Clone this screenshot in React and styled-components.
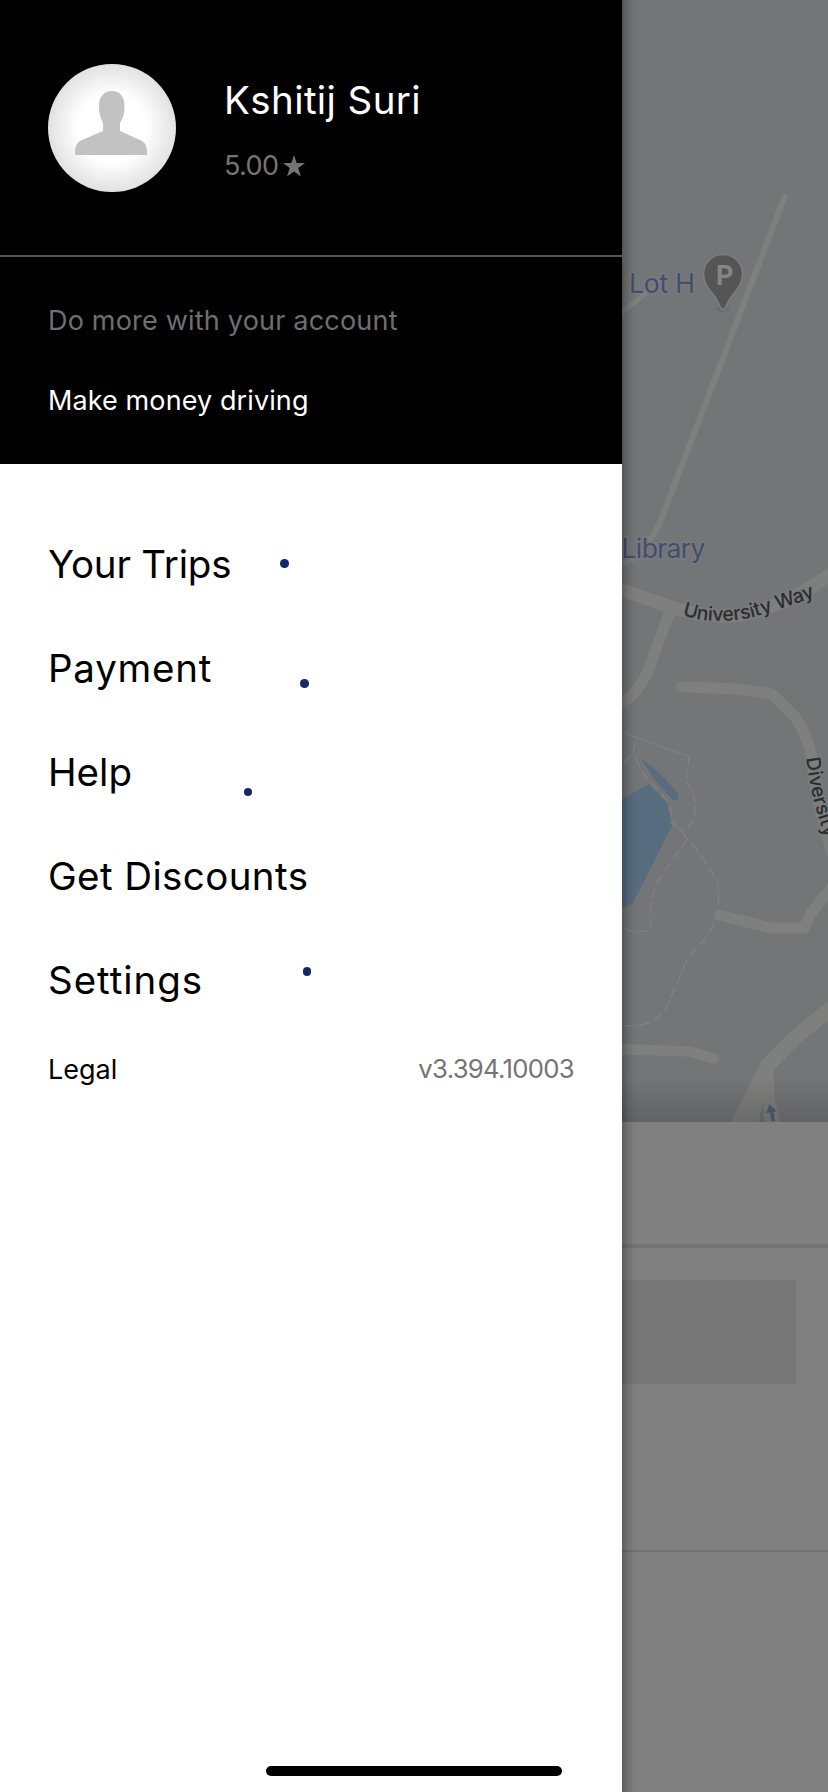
import React from "react";
import styled, { createGlobalStyle } from "styled-components";

const GlobalStyle = createGlobalStyle`
  *, *::before, *::after { box-sizing: border-box; }
  html, body, #root { margin: 0; padding: 0; }
  body { font-family: Inter, Roboto, "Liberation Sans", sans-serif; background: #808080; }
`;

const Screen = styled.div`
  position: relative;
  display: grid;
  grid-template-columns: 622px 1fr;
  width: 828px;
  height: 1792px;
  overflow: hidden;
`;

const Drawer = styled.aside`
  position: relative;
  display: flex;
  flex-direction: column;
  background: #fff;
  color: #000;
`;

const Header = styled.header`
  height: 464px;
  background: #000;
  color: #fff;
`;

const Profile = styled.div`
  display: flex;
  gap: 48px;
  height: 257px;
  padding: 64px 48px 0;
  border-bottom: 2px solid #545454;
`;

const Avatar = styled.div`
  width: 128px;
  height: 128px;
  border-radius: 50%;
  background: radial-gradient(circle, #fff 0, #fff 38%, #e2e2e2 70%);
  overflow: hidden;
  svg { display: block; }
`;

const Identity = styled.div`
  display: flex;
  flex-direction: column;
  gap: 24px;
  padding-top: 12px;
`;

const Name = styled.div`
  font-size: 38.5px;
  font-weight: 380;
  line-height: 49px;
  letter-spacing: 0.4px;
  white-space: nowrap;
`;

const Rating = styled.div`
  display: flex;
  align-items: center;
  gap: 5px;
  font-size: 27px;
  font-weight: 380;
  line-height: 34px;
  letter-spacing: -0.6px;
  color: #757575;
`;

const Account = styled.div`
  padding: 24px 48px 0;
`;

const AccountLine = styled.div`
  font-size: 27px;
  font-weight: 380;
  line-height: 80px;
  letter-spacing: ${(p) => p.$track || 0}px;
  color: ${(p) => (p.$muted ? "#6f6f6f" : "#fff")};
  white-space: nowrap;
`;

const Nav = styled.nav`
  display: flex;
  flex-direction: column;
  padding: 48px 48px 0;
`;

const NavItem = styled.a`
  font-size: 38.5px;
  line-height: 104px;
  letter-spacing: ${(p) => p.$track || 0}px;
  white-space: nowrap;
`;

const Meta = styled.div`
  display: flex;
  align-items: center;
  justify-content: space-between;
  height: 76px;
  padding: 0 48px 2px;
`;

const Legal = styled.span`
  font-size: 27px;
`;

const Version = styled.span`
  padding-bottom: 2px;
  font-size: 25.7px;
  letter-spacing: -0.7px;
  color: #757575;
`;

const Dot = styled.i`
  position: absolute;
  left: ${(p) => p.$x}px;
  top: ${(p) => p.$y}px;
  width: 8.5px;
  height: 8.5px;
  border-radius: 50%;
  background: #142a66;
`;

const HomeBar = styled.div`
  width: 296px;
  height: 10px;
  margin: auto 0 16px 266px;
  border-radius: 5px;
  background: #000;
`;

const Backdrop = styled.main`
  position: relative;
  background: #808080;
  &::after {
    content: "";
    position: absolute;
    inset: 0 auto 0 0;
    width: 16px;
    background: linear-gradient(90deg, rgba(0,0,0,.28), rgba(0,0,0,.12) 35%, rgba(0,0,0,.03) 70%, transparent);
  }
`;

const MapView = styled.svg`
  display: block;
  width: 206px;
  height: 1122px;
`;

const Search = styled.div`
  height: 126px;
  border-bottom: 4px solid #737373;
`;

const Shortcuts = styled.div`
  height: 304px;
  padding: 32px 32px 0 0;
  border-bottom: 2px solid #727272;
`;

const Placeholder = styled.div`
  height: 104px;
  background: #767676;
`;

const navItems = [
  { label: "Your Trips", track: -0.2 },
  { label: "Payment", track: 0.75 },
  { label: "Help", track: 0 },
  { label: "Get Discounts", track: 0.4 },
  { label: "Settings", track: 0.95 },
];

const dots = [[280, 559], [300, 679.3], [243.8, 787.6], [302.7, 967.2]];

function CampusMap() {
  return (
    <MapView viewBox="622 0 206 1122">
      <defs>
        <linearGradient id="fade" x1="0" y1="0" x2="0" y2="1">
          <stop offset="0" stopColor="#000" stopOpacity="0" />
          <stop offset="1" stopColor="#000" stopOpacity="0.16" />
        </linearGradient>
        <path id="university" d="M682.500 615 C704 623 735 623 762 614.500 C785 607 796 604 817 596" />
        <path id="diversity" d="M806 758 L810 784 C814 805 820 821 828 850" />
      </defs>
      <rect x="622" width="206" height="1122" fill="#737577" />
      <g fill="none" stroke="#7f7f7e" strokeLinecap="round" strokeLinejoin="round">
        <path d="M784.5 197 L664 512 Q657 533 647 542" strokeWidth="6" />
        <path d="M647 542 L637 557 L618 565" strokeWidth="5" />
        <path d="M618 315 L645 294 L663 282" strokeWidth="5" />
        <path d="M616 588 L668 606 Q722 625 765 609 Q800 597 832 573" strokeWidth="13" />
        <path d="M671 608 L648 671 Q639 693 617 707" strokeWidth="11" />
        <path d="M681 687 L740 689 L772 694 L795 717 Q808 735 812 760 Q817 805 832 853" strokeWidth="11" />
        <path d="M719 915 L771 928 L804 928 L811 913 L832 887" strokeWidth="11" strokeLinejoin="miter" />
        <path d="M616 1049 L690 1051.5 L714 1058.5" strokeWidth="10.5" />
        <path d="M834 1006 L793 1039 L767 1066" strokeWidth="15" />
      </g>
      <path d="M761 1062 L731 1122 H780 L775 1100 L773 1066Z" fill="#7f7f7e" />
      <path d="M763 1101 L759 1122 H764Z" fill="#6d7073" />
      <path d="M622 799 L649 784 L667 803 L672 825 L633 903 L622 908Z" fill="#576c7e" />
      <path d="M641 759 Q657 770 665 779 L678 794 V800 H673 L658 784Z" fill="#576c7e" />
      <g fill="none" stroke="#808284" strokeWidth="1.3">
        <path d="M625 733 L689 757" strokeWidth="1" />
        <path d="M689 757 L686 781 Q697 796 695 811 Q692 827 682 831 L670 822" strokeDasharray="9 4" />
        <path d="M635 743 L633 753 L643 773 L669 803 L674 823 L691 843 Q710 866 718 884 L719 915 Q710 935 696 949 Q686 957 682 972 L665 1010 Q656 1021 642 1025 L622 1026" strokeDasharray="10 5" />
        <path d="M688 838 L657 882 Q648 905 651 930 Q637 934 623 928" strokeDasharray="10 5" />
        <path d="M624 763 L630 755" />
      </g>
      <g fontFamily="Inter, Roboto, sans-serif" fontSize="26.5" fill="#414e6c" stroke="#797b7d" strokeWidth="3" paintOrder="stroke">
        <text x="629" y="293" textLength="66">Lot H</text>
        <text x="621.5" y="558" textLength="84">Library</text>
      </g>
      <g fontFamily="Inter, Roboto, sans-serif" fontSize="19.5" fontWeight="500" fill="#292d30" stroke="#7a7c7d" strokeWidth="3" paintOrder="stroke">
        <text textLength="137"><textPath href="#university">University Way</textPath></text>
        <text><textPath href="#diversity">Diversity</textPath></text>
      </g>
      <ellipse cx="723" cy="309" rx="7" ry="3" fill="#6b6d6e" />
      <path d="M723 254.500 C712 254.500 703.500 263 703.500 274 C703.500 289 717 294 720 307 Q723 312 726 307 C730 294 742.500 289 742.500 274 C742.500 263 734 254.500 723 254.500Z" fill="#555" stroke="#7c7d7e" strokeWidth="1.600" />
      <text x="716" y="285" fontFamily="Roboto, sans-serif" fontSize="27" fontWeight="700" fill="#858585">P</text>
      <path d="M769.500 1104 L776.500 1111.500 L773.500 1112 L775 1121 L771.500 1121 L770 1112.500 L766 1113Z" fill="#535c7a" />
      <rect x="622" y="1076" width="206" height="46" fill="url(#fade)" />
    </MapView>
  );
}

export default function App() {
  return (
    <>
      <GlobalStyle />
      <Screen>
        <Drawer>
          <Header>
            <Profile>
              <Avatar>
                <svg width="128" height="128" viewBox="0 0 128 128">
                  <path d="M64 27 C55.500 27 51 33 51 42 C51 51 53 54 55 59 V67 L34 76 C29 78 27 83 27 88 V91 H99 V88 C99 82 97 78 92 76 L72 67 V59 C75 54 76.500 50 76.500 42 C76.500 33 72 27 64 27Z" fill="#c2c2c2" />
                </svg>
              </Avatar>
              <Identity>
                <Name>Kshitij Suri</Name>
                <Rating>
                  5.00
                  <svg width="22" height="22" viewBox="0 0 22 22">
                    <path d="M11 0 L13.600 8 H22 L15.200 13 L18 21.500 L11 16.500 L4 21.500 L6.800 13 L0 8 H8.400Z" fill="#757575" />
                  </svg>
                </Rating>
              </Identity>
            </Profile>
            <Account>
              <AccountLine $muted $track={0.2}>Do more with your account</AccountLine>
              <AccountLine $track={0.1}>Make money driving</AccountLine>
            </Account>
          </Header>
          <Nav>
            {navItems.map((item) => (
              <NavItem key={item.label} $track={item.track}>{item.label}</NavItem>
            ))}
          </Nav>
          <Meta>
            <Legal>Legal</Legal>
            <Version>v3.394.10003</Version>
          </Meta>
          {dots.map(([x, y]) => <Dot key={y} $x={x} $y={y} />)}
          <HomeBar />
        </Drawer>
        <Backdrop>
          <CampusMap />
          <Search />
          <Shortcuts>
            <Placeholder />
          </Shortcuts>
        </Backdrop>
      </Screen>
    </>
  );
}
